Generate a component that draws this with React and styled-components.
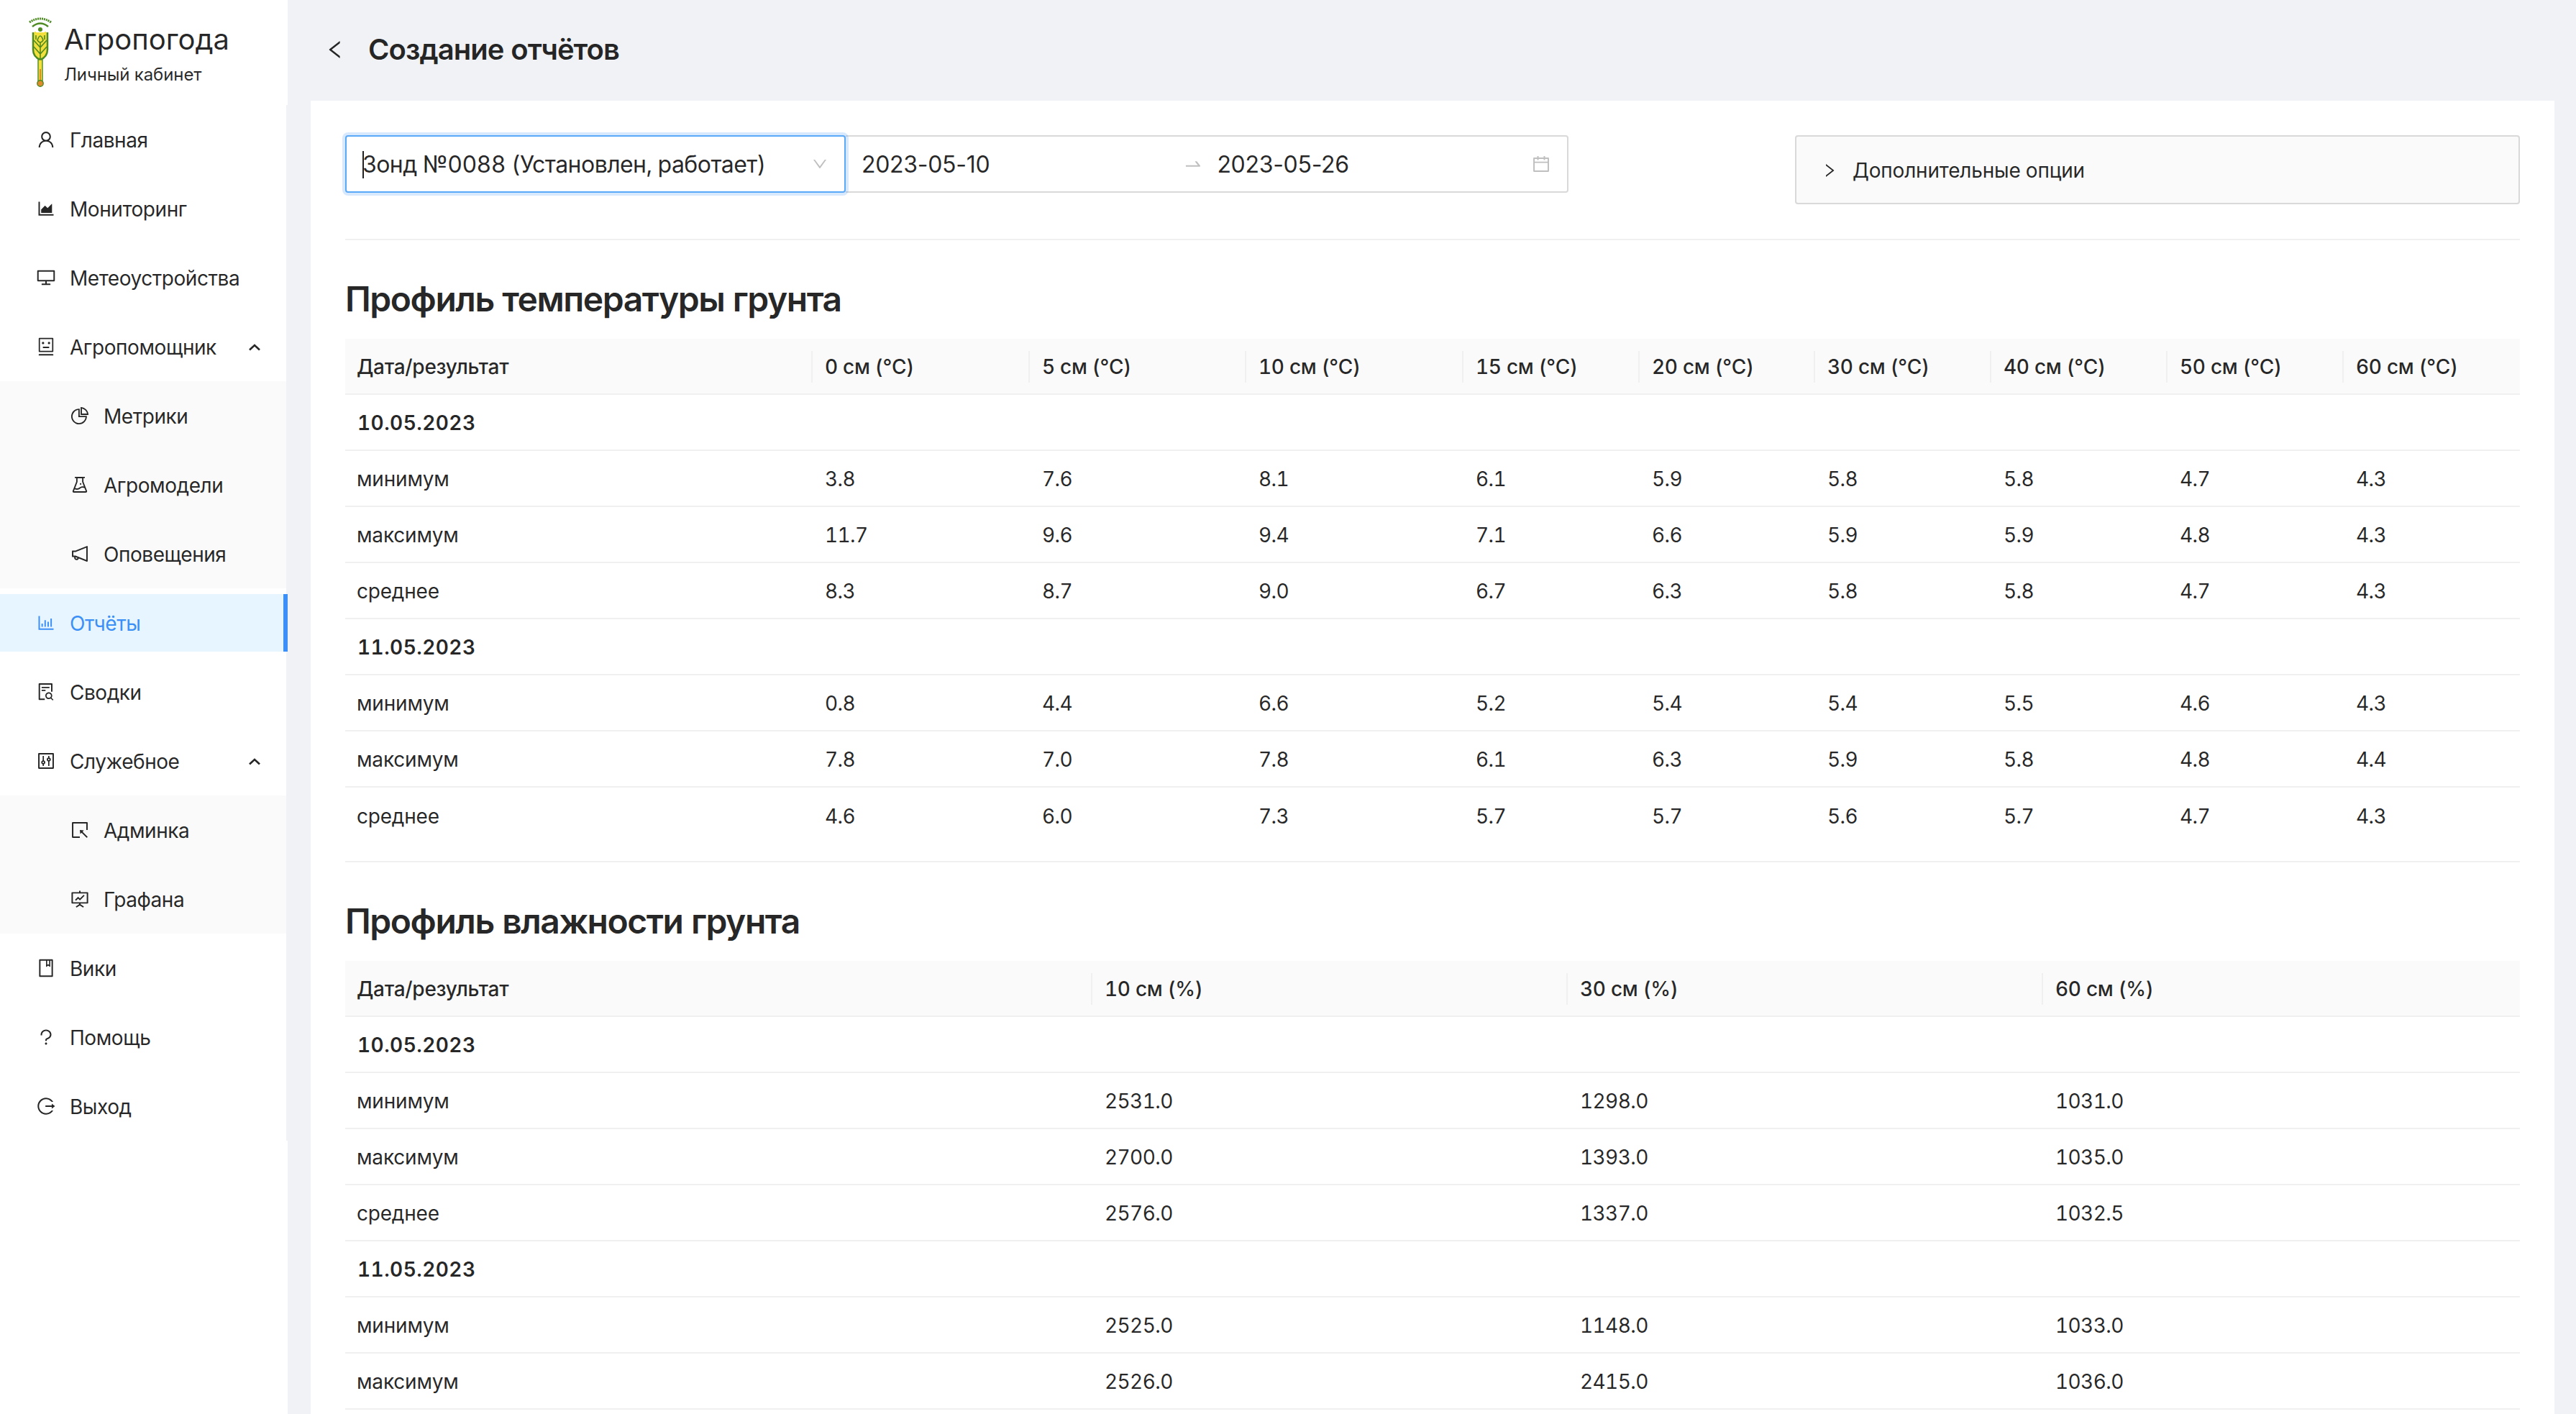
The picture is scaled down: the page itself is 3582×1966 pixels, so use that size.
import React from 'react';
import styled, { createGlobalStyle } from 'styled-components';
import {
  AiOutlineUser,
  AiOutlineAreaChart,
  AiOutlineDesktop,
  AiOutlineRobot,
  AiOutlinePieChart,
  AiOutlineExperiment,
  AiOutlineNotification,
  AiOutlineBarChart,
  AiOutlineFileSearch,
  AiOutlineControl,
  AiOutlineSelect,
  AiOutlineFundProjectionScreen,
  AiOutlineBook,
  AiOutlineQuestion,
  AiOutlineLogout,
  AiOutlineLeft,
  AiOutlineRight,
  AiOutlineDown,
  AiOutlineCalendar,
  AiOutlineSwapRight,
} from 'react-icons/ai';

const GlobalStyle = createGlobalStyle`
  html, body {
    margin: 0;
    height: 100%;
    overflow: hidden;
    background: #f0f2f5;
    font-family: Inter, "Noto Sans", sans-serif;
    font-feature-settings: 'tnum';
    color: rgba(0, 0, 0, 0.85);
  }
  * {
    box-sizing: border-box;
  }
`;

const Layout = styled.div`
  display: flex;
  width: 3582px;
  height: 1966px;
  overflow: hidden;
`;

const Sidebar = styled.aside`
  width: 400px;
  flex-shrink: 0;
  background: #ffffff;
`;

const LogoArea = styled.div`
  height: 146px;
  padding: 20px 0 0 40px;
  display: flex;
  gap: 17px;
`;

const LogoTexts = styled.div`
  display: flex;
  flex-direction: column;
`;

const LogoTitle = styled.div`
  font-size: 40px;
  line-height: 56px;
  margin-top: 7px;
`;

const LogoSub = styled.div`
  font-size: 24px;
  line-height: 34px;
  margin-top: 4px;
  letter-spacing: -0.1px;
`;

const Menu = styled.nav`
  display: flex;
  flex-direction: column;
  border-right: 2px solid #f0f2f5;
`;

const Item = styled.div`
  position: relative;
  height: 80px;
  margin: 8px ${(p) => (p.$active ? '-2px' : '0')} 8px 0;
  padding: 2px 0 0 ${(p) => (p.$sub ? '97px' : '50px')};
  display: flex;
  align-items: center;
  font-size: 28px;
  letter-spacing: -0.45px;
  color: ${(p) => (p.$active ? '#3b8ff6' : 'rgba(0, 0, 0, 0.85)')};
  background: ${(p) => (p.$active ? '#e6f5ff' : 'transparent')};

  &::after {
    content: '';
    display: ${(p) => (p.$active ? 'block' : 'none')};
    position: absolute;
    top: 0;
    right: 0;
    bottom: 0;
    width: 6px;
    background: #3b8ff6;
  }
`;

const ItemIcon = styled.span`
  width: 28px;
  margin-top: -2px;
  margin-right: 19px;
  display: flex;
  align-items: center;
  justify-content: center;
  font-size: 32px;
`;

const Arrow = styled.svg`
  position: absolute;
  right: 35px;
  top: 35px;
  width: 18px;
  height: 12px;
`;

const Submenu = styled.div`
  display: flex;
  flex-direction: column;
  background: #fafafa;
`;

const Main = styled.main`
  flex: 1;
  min-width: 0;
  padding: 0 30px 0 32px;
`;

const PageHeader = styled.header`
  height: 140px;
  padding: 0 0 2px 20px;
  display: flex;
  align-items: center;
`;

const BackIcon = styled.span`
  display: flex;
  font-size: 32px;
  margin-right: 30px;
  margin-left: -2px;
`;

const PageTitle = styled.h1`
  margin: 0;
  font-size: 40px;
  line-height: 56px;
  font-weight: 600;
  letter-spacing: -0.95px;
`;

const Card = styled.section`
  background: #ffffff;
  padding: 48px;
  height: 1826px;
`;

const Controls = styled.div`
  display: flex;
  align-items: flex-start;
  height: 96px;
`;

const SelectBox = styled.div`
  position: relative;
  z-index: 1;
  width: 696px;
  height: 80px;
  padding: 0 22px;
  display: flex;
  align-items: center;
  justify-content: space-between;
  font-size: 32px;
  letter-spacing: -0.55px;
  border: 2px solid #5aa8f8;
  border-radius: 4px;
  box-shadow: 0 0 0 4px rgba(59, 143, 246, 0.2);
  background: #ffffff;
`;

const Caret = styled.span`
  position: absolute;
  left: 22px;
  top: 20px;
  width: 2px;
  height: 38px;
  background: #222222;
`;

const SelectArrow = styled.span`
  display: flex;
  font-size: 24px;
  color: rgba(0, 0, 0, 0.25);
`;

const RangePicker = styled.div`
  width: 1005px;
  height: 80px;
  padding: 0 22px;
  display: flex;
  align-items: center;
  font-size: 32px;
  font-feature-settings: normal;
  letter-spacing: -0.3px;
  border: 2px solid #d9d9d9;
  border-left: 0;
  border-radius: 0 4px 4px 0;
`;

const RangeValue = styled.span`
  width: ${(p) => p.$width};
`;

const RangeIcon = styled.span`
  display: flex;
  font-size: ${(p) => p.$size};
  color: rgba(0, 0, 0, 0.25);
  margin-right: ${(p) => p.$gap};
`;

const Options = styled.div`
  width: 1008px;
  height: 96px;
  margin-left: auto;
  padding: 2px 46px 0 36px;
  display: flex;
  align-items: center;
  font-size: 28px;
  letter-spacing: -0.2px;
  background: #fafafa;
  border: 2px solid #d9d9d9;
  border-radius: 4px;
`;

const OptionsIcon = styled.span`
  display: flex;
  font-size: 24px;
  margin-right: 20px;
  margin-left: -2px;
`;

const Divider = styled.hr`
  margin: ${(p) => p.$top} 0 0;
  height: 2px;
  border: 0;
  background: #f0f0f0;
`;

const SectionTitle = styled.h2`
  margin: 54px 0 27px;
  font-size: 48px;
  line-height: 56px;
  font-weight: 600;
  letter-spacing: -1.45px;
`;

const Table = styled.table`
  width: 3024px;
  border-collapse: separate;
  border-spacing: 0;
  table-layout: fixed;
  font-size: 28px;
`;

const Col = styled.col`
  width: ${(p) => p.$w}px;
`;

const HeadCell = styled.th`
  position: relative;
  height: 78px;
  padding: 2px 16px 0;
  text-align: left;
  font-weight: 500;
  letter-spacing: -0.3px;
  background: #fafafa;
  border-bottom: 2px solid #f0f0f0;

  &:not(:first-child) {
    padding-left: 17px;
  }

  &:not(:last-child)::after {
    content: '';
    position: absolute;
    top: 17px;
    right: 0;
    width: 2px;
    height: 44px;
    background: #f0f0f0;
  }
`;

const Cell = styled.td`
  height: 78px;
  padding: 2px 16px 0;
  font-weight: 400;
  letter-spacing: -0.2px;
  border-bottom: 2px solid #f0f0f0;

  &:not(:first-child) {
    padding-left: 17px;
    letter-spacing: -0.6px;
  }

  tr:last-child > & {
    border-bottom: ${(p) => (p.$lastOpen ? '2px solid #f0f0f0' : '0')};
  }
`;

const DateCell = styled(Cell)`
  padding-left: 17px;
  font-weight: 600;
  letter-spacing: 0.45px;
`;

const tempColumns = [650, 302, 301, 302, 245, 244, 245, 245, 245, 245];
const humColumns = [1039, 661, 661, 663];

const tempHead = ['Дата/результат', '0 см (°C)', '5 см (°C)', '10 см (°C)', '15 см (°C)', '20 см (°C)', '30 см (°C)', '40 см (°C)', '50 см (°C)', '60 см (°C)'];
const humHead = ['Дата/результат', '10 см (%)', '30 см (%)', '60 см (%)'];

const tempRows = [
  ['10.05.2023'],
  ['минимум', '3.8', '7.6', '8.1', '6.1', '5.9', '5.8', '5.8', '4.7', '4.3'],
  ['максимум', '11.7', '9.6', '9.4', '7.1', '6.6', '5.9', '5.9', '4.8', '4.3'],
  ['среднее', '8.3', '8.7', '9.0', '6.7', '6.3', '5.8', '5.8', '4.7', '4.3'],
  ['11.05.2023'],
  ['минимум', '0.8', '4.4', '6.6', '5.2', '5.4', '5.4', '5.5', '4.6', '4.3'],
  ['максимум', '7.8', '7.0', '7.8', '6.1', '6.3', '5.9', '5.8', '4.8', '4.4'],
  ['среднее', '4.6', '6.0', '7.3', '5.7', '5.7', '5.6', '5.7', '4.7', '4.3'],
];

const humRows = [
  ['10.05.2023'],
  ['минимум', '2531.0', '1298.0', '1031.0'],
  ['максимум', '2700.0', '1393.0', '1035.0'],
  ['среднее', '2576.0', '1337.0', '1032.5'],
  ['11.05.2023'],
  ['минимум', '2525.0', '1148.0', '1033.0'],
  ['максимум', '2526.0', '2415.0', '1036.0'],
];

function Logo() {
  return (
    <svg width="32" height="104" viewBox="40 20 32 104" style={{ flexShrink: 0 }}>
      <path d="M41 31 Q56 21 71 31" fill="none" stroke="#4d8b22" strokeWidth="3" strokeDasharray="2 1" />
      <path d="M45 37 Q56 28 67 37" fill="none" stroke="#4d8b22" strokeWidth="2.5" />
      <circle cx="56" cy="41" r="3" fill="#4d8b22" />
      <path d="M46 45 V69 Q46 79 56 83 Q66 79 66 69 V45" fill="#f3e03d" stroke="#4d8b22" strokeWidth="2.5" />
      <path d="M49 44 V52 M63 44 V52" stroke="#f3e03d" strokeWidth="2" />
      <path d="M56 54 V84 M47 56 L56 66 L65 56 M47 65 L56 75 L65 65 M50 49 V55 M62 49 V55" fill="none" stroke="#4d8b22" strokeWidth="1.6" />
      <path d="M52 56 Q56 44 60 56 Q56 62 52 56 Z" fill="#f3e03d" stroke="#4d8b22" strokeWidth="1.6" />
      <rect x="53" y="83" width="6" height="32" fill="#f3e03d" stroke="#4d8b22" strokeWidth="1.4" />
      <rect x="55" y="96" width="2" height="19" fill="#e08a2b" />
      <circle cx="56" cy="116" r="4.2" fill="#e08a2b" stroke="#4d8b22" strokeWidth="1.4" />
    </svg>
  );
}

function MenuArrow() {
  return (
    <Arrow viewBox="0 0 18 12">
      <polyline points="2,9.5 9,3 16,9.5" fill="none" stroke="rgba(0,0,0,0.85)" strokeWidth="2.6" />
    </Arrow>
  );
}

function NavItem({ icon: Icon, label, sub, active, open }) {
  return (
    <Item $sub={sub} $active={active}>
      <ItemIcon>
        <Icon />
      </ItemIcon>
      {label}
      {open && <MenuArrow />}
    </Item>
  );
}

function DataTable({ columns, head, rows, lastOpen }) {
  return (
    <Table>
      <colgroup>
        {columns.map((w, i) => (
          <Col key={i} $w={w} />
        ))}
      </colgroup>
      <thead>
        <tr>
          {head.map((h) => (
            <HeadCell key={h}>{h}</HeadCell>
          ))}
        </tr>
      </thead>
      <tbody>
        {rows.map((row, i) =>
          row.length === 1 ? (
            <tr key={i}>
              <DateCell colSpan={columns.length}>{row[0]}</DateCell>
            </tr>
          ) : (
            <tr key={i}>
              {row.map((v, j) => (
                <Cell key={j} $lastOpen={lastOpen}>
                  {v}
                </Cell>
              ))}
            </tr>
          )
        )}
      </tbody>
    </Table>
  );
}

export default function App() {
  return (
    <Layout>
      <GlobalStyle />
      <Sidebar>
        <LogoArea>
          <Logo />
          <LogoTexts>
            <LogoTitle>Агропогода</LogoTitle>
            <LogoSub>Личный кабинет</LogoSub>
          </LogoTexts>
        </LogoArea>
        <Menu>
          <NavItem icon={AiOutlineUser} label="Главная" />
          <NavItem icon={AiOutlineAreaChart} label="Мониторинг" />
          <NavItem icon={AiOutlineDesktop} label="Метеоустройства" />
          <NavItem icon={AiOutlineRobot} label="Агропомощник" open />
          <Submenu>
            <NavItem sub icon={AiOutlinePieChart} label="Метрики" />
            <NavItem sub icon={AiOutlineExperiment} label="Агромодели" />
            <NavItem sub icon={AiOutlineNotification} label="Оповещения" />
          </Submenu>
          <NavItem active icon={AiOutlineBarChart} label="Отчёты" />
          <NavItem icon={AiOutlineFileSearch} label="Сводки" />
          <NavItem icon={AiOutlineControl} label="Служебное" open />
          <Submenu>
            <NavItem sub icon={AiOutlineSelect} label="Админка" />
            <NavItem sub icon={AiOutlineFundProjectionScreen} label="Графана" />
          </Submenu>
          <NavItem icon={AiOutlineBook} label="Вики" />
          <NavItem icon={AiOutlineQuestion} label="Помощь" />
          <NavItem icon={AiOutlineLogout} label="Выход" />
        </Menu>
      </Sidebar>
      <Main>
        <PageHeader>
          <BackIcon>
            <AiOutlineLeft />
          </BackIcon>
          <PageTitle>Создание отчётов</PageTitle>
        </PageHeader>
        <Card>
          <Controls>
            <SelectBox>
              <Caret />
              <span>Зонд №0088 (Установлен, работает)</span>
              <SelectArrow>
                <AiOutlineDown />
              </SelectArrow>
            </SelectBox>
            <RangePicker>
              <RangeValue $width="455px">2023-05-10</RangeValue>
              <RangeIcon $size="28px" $gap="19px">
                <AiOutlineSwapRight />
              </RangeIcon>
              <RangeValue $width="444px">2023-05-26</RangeValue>
              <RangeIcon $size="28px">
                <AiOutlineCalendar />
              </RangeIcon>
            </RangePicker>
            <Options>
              <OptionsIcon>
                <AiOutlineRight />
              </OptionsIcon>
              Дополнительные опции
            </Options>
          </Controls>
          <Divider $top="48px" />
          <SectionTitle>Профиль температуры грунта</SectionTitle>
          <DataTable columns={tempColumns} head={tempHead} rows={tempRows} />
          <Divider $top="24px" />
          <SectionTitle>Профиль влажности грунта</SectionTitle>
          <DataTable columns={humColumns} head={humHead} rows={humRows} lastOpen />
        </Card>
      </Main>
    </Layout>
  );
}
